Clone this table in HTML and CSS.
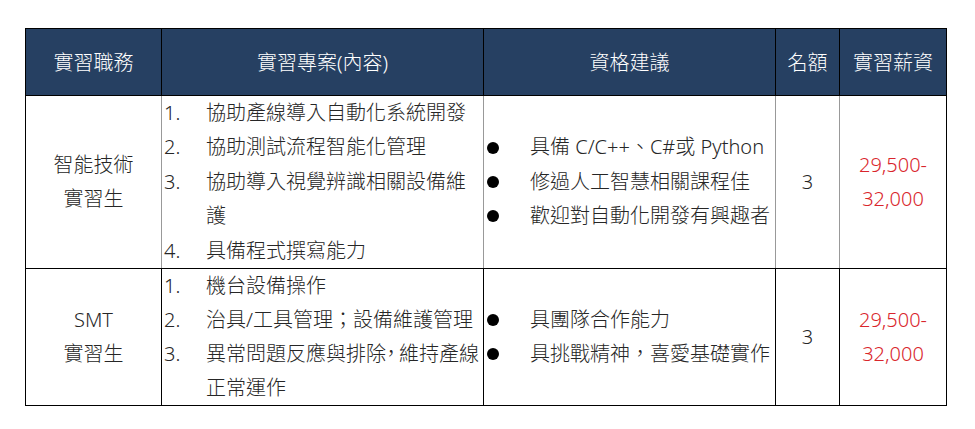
FILE: index.html
```html
<!DOCTYPE html>
<html lang="zh-Hant">
<head>
<meta charset="utf-8">
<title>實習職缺</title>
<link rel="stylesheet" href="styles.css">
</head>
<body>
<table class="intern">
  <colgroup>
    <col class="c-role">
    <col class="c-proj">
    <col class="c-req">
    <col class="c-num">
    <col class="c-pay">
  </colgroup>
  <thead>
    <tr>
      <th>實習職務</th>
      <th>實習專案(內容)</th>
      <th>資格建議</th>
      <th>名額</th>
      <th>實習薪資</th>
    </tr>
  </thead>
  <tbody>
    <tr class="row-soft">
      <td class="role">智能技術<br>實習生</td>
      <td class="proj">
        <ol class="steps">
          <li><span class="no">1.</span><span class="txt">協助產線導入自動化系統開發</span></li>
          <li><span class="no">2.</span><span class="txt">協助測試流程智能化管理</span></li>
          <li><span class="no">3.</span><span class="txt">協助導入視覺辨識相關設備維<br>護</span></li>
          <li><span class="no">4.</span><span class="txt">具備程式撰寫能力</span></li>
        </ol>
      </td>
      <td class="req">
        <ul class="bullets">
          <li><span class="dot"></span><span class="txt">具備 C/C++、C#或 Python</span></li>
          <li><span class="dot"></span><span class="txt">修過人工智慧相關課程佳</span></li>
          <li><span class="dot"></span><span class="txt">歡迎對自動化開發有興趣者</span></li>
        </ul>
      </td>
      <td class="num">3</td>
      <td class="pay">29,500-<br>32,000</td>
    </tr>
    <tr>
      <td class="role">SMT<br>實習生</td>
      <td class="proj">
        <ol class="steps">
          <li><span class="no">1.</span><span class="txt">機台設備操作</span></li>
          <li><span class="no">2.</span><span class="txt">治具/工具管理；設備維護管理</span></li>
          <li><span class="no">3.</span><span class="txt">異常問題反應與排除<span class="half">，</span>維持產線<br>正常運作</span></li>
        </ol>
      </td>
      <td class="req">
        <ul class="bullets">
          <li><span class="dot"></span><span class="txt">具團隊合作能力</span></li>
          <li><span class="dot"></span><span class="txt">具挑戰精神，喜愛基礎實作</span></li>
        </ul>
      </td>
      <td class="num">3</td>
      <td class="pay">29,500-<br>32,000</td>
    </tr>
  </tbody>
</table>
</body>
</html>
```

FILE: styles.css
```css
html, body {
  margin: 0;
  padding: 0;
  background: #ffffff;
}

body {
  font-family: "Noto Sans", "Noto Sans CJK TC", sans-serif;
  font-size: 20px;
  font-weight: 300;
  color: #262626;
}

.intern {
  border-collapse: collapse;
  table-layout: fixed;
  width: 921px;
  margin: 28px 0 0 25px;
}

.c-role { width: 136px; }
.c-proj { width: 322px; }
.c-req  { width: 292px; }
.c-num  { width: 64px; }
.c-pay  { width: 107px; }

.intern th,
.intern td {
  border: 1px solid #000000;
  padding: 0;
  vertical-align: middle;
  line-height: 34px;
}

.intern th {
  background: #264062;
  color: #ffffff;
  font-weight: 300;
  height: 64px;
  padding-top: 2px;
  text-align: center;
}

.row-soft td {
  line-height: 34.4px;
}

.row-soft td + td {
  border-left-color: #999999;
}

.row-soft td:not(:last-child) {
  border-right-color: #999999;
}

.role,
.num,
.pay {
  text-align: center;
}

.pay {
  color: #d9252c;
}

.steps,
.bullets {
  list-style: none;
  margin: 0;
  padding: 0;
}

.steps li {
  display: grid;
  grid-template-columns: 44px 1fr;
  white-space: nowrap;
}

.steps .no {
  padding-left: 2px;
}

.bullets li {
  display: grid;
  grid-template-columns: 46px 1fr;
  align-items: center;
  white-space: nowrap;
}

.bullets .dot {
  width: 12px;
  height: 12px;
  margin-left: 3px;
  border-radius: 50%;
  background: #000000;
}

.half {
  font-feature-settings: "halt";
  margin-right: 3px;
}
```
